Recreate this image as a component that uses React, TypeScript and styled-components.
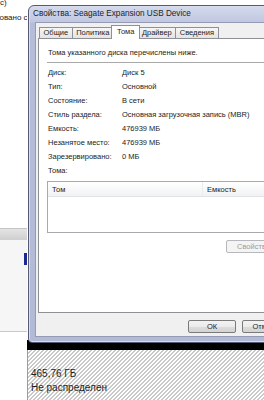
import React from 'react';
import styled, { createGlobalStyle } from 'styled-components';

const GlobalStyle = createGlobalStyle`
  html, body {
    margin: 0;
    padding: 0;
    background: #fff;
  }
  body {
    font-family: 'Liberation Sans', Arial, sans-serif;
    overflow: hidden;
  }
  * {
    box-sizing: border-box;
  }
`;

const Desktop = styled.div`
  position: relative;
  width: 264px;
  height: 400px;
  overflow: hidden;
  background: #fff;
`;

/* disk management window behind the dialog */
const Backdrop = styled.div`
  display: flex;
  height: 100%;
`;

const SidePane = styled.div`
  width: 27px;
  flex: none;
  display: flex;
  flex-direction: column;
`;

const SideText = styled.div`
  height: 228px;
  overflow: hidden;
  font-size: 8px;
  line-height: 15px;
  color: #222;
  white-space: nowrap;
`;

const SideLine = styled.div<{ $shift?: number }>`
  margin-left: ${({ $shift }) => $shift ?? 0}px;
  &:first-child {
    margin-top: -5px;
  }
`;

const Band = styled.div`
  height: 12px;
  border-top: 1px solid #c4c4c4;
  background: linear-gradient(#e4e4e4, #cfcfcf);
`;

const MidPane = styled.div`
  height: 92px;
  background: #f6f6f6;
  border-bottom: 1px solid #c9c9c9;
  display: flex;
  justify-content: flex-end;
  padding-top: 13px;
`;

const BlueMark = styled.div`
  width: 3px;
  height: 12px;
  background: #1b2a8e;
`;

const DiskPane = styled.div`
  flex: 1;
  display: flex;
  flex-direction: column;
  justify-content: flex-end;
`;

const DiskHead = styled.div`
  height: 10px;
  background: #000;
`;

const Unallocated = styled.div`
  height: 50px;
  border-left: 1px solid #9c9c9c;
  padding: 17px 0 0 3px;
  font-size: 10px;
  line-height: 14px;
  color: #1f1f1f;
  background: repeating-linear-gradient(
    135deg,
    #fff 0 1.9px,
    #c9c9c9 1.9px 2.83px
  );
`;

/* properties dialog */
const Dialog = styled.div`
  position: absolute;
  left: 28px;
  top: 5px;
  width: 277px;
  height: 338px;
  display: flex;
  flex-direction: column;
  padding: 0 6px 5px;
  border: 1px solid #545a76;
  border-radius: 6px 6px 4px 4px;
  background: linear-gradient(#d5daec 0, #c0c7e0 16px, #b6bdd9 17px, #b3bad6 100%);
  box-shadow: inset 0 0 0 1px #d9ddee;
`;

const Title = styled.div`
  height: 16px;
  margin-left: -2px;
  font-size: 8.2px;
  line-height: 16px;
  color: #1e1e1e;
  white-space: nowrap;
`;

const Client = styled.div`
  flex: 1;
  display: flex;
  flex-direction: column;
  padding: 4px 7px 0 2px;
  background: #f0f0f0;
  border: 1px solid #959bb4;
`;

const TabRow = styled.div`
  display: flex;
  align-items: flex-end;
  height: 11px;
  padding-left: 2px;
`;

const Tab = styled.div<{ $active?: boolean }>`
  position: relative;
  z-index: ${({ $active }) => ($active ? 1 : 0)};
  height: ${({ $active }) => ($active ? 14 : 11)}px;
  margin: 0 ${({ $active }) => ($active ? -2 : 0)}px
    ${({ $active }) => ($active ? -1 : 0)}px
    ${({ $active }) => ($active ? -3 : -1)}px;
  padding: ${({ $active }) => ($active ? '1px 5px 0' : '0 3.5px')};
  font-size: 7.5px;
  line-height: 10px;
  color: #1e1e1e;
  white-space: nowrap;
  border: 1px solid #8d9095;
  border-bottom: none;
  background: ${({ $active }) =>
    $active ? '#fff' : 'linear-gradient(#f6f6f6, #e4e4e4)'};
`;

const Panel = styled.div`
  height: 275px;
  padding: 7px 8px 0;
  background: #fff;
  border: 1px solid #8d9095;
  font-size: 7.5px;
  color: #222;
`;

const Intro = styled.div`
  line-height: 13px;
  padding-left: 1px;
  white-space: nowrap;
`;

const Separator = styled.div`
  height: 1px;
  margin: 3px -20px 2px 0;
  background: #a9a9a9;
`;

const InfoGrid = styled.div`
  display: grid;
  grid-template-columns: 74px 1fr;
  grid-auto-rows: 14px;
  align-items: center;
  padding-left: 1px;
  white-space: nowrap;
`;

const Caption = styled.div`
  margin-top: 1px;
  line-height: 14px;
  padding-left: 1px;
`;

const ListView = styled.div`
  height: 52px;
  margin-top: 3px;
  border: 1px solid #a6a9b0;
`;

const ListHeader = styled.div`
  display: flex;
  height: 15px;
  line-height: 15px;
  background: linear-gradient(#fff, #f1f2f4);
  border-bottom: 1px solid #e2e3e6;
`;

const HeaderCell = styled.div<{ $width?: number }>`
  flex: ${({ $width }) => ($width ? 'none' : '1')};
  width: ${({ $width }) => ($width ? `${$width}px` : 'auto')};
  padding-left: 4px;
  border-right: 1px solid #ebecef;
  white-space: nowrap;
`;

const PanelActions = styled.div`
  display: flex;
  justify-content: flex-end;
  margin-top: 7px;
`;

const PushButton = styled.div<{ $disabled?: boolean; $width: number }>`
  width: ${({ $width }) => $width}px;
  height: 13px;
  font-size: 7.5px;
  line-height: 11px;
  text-align: center;
  white-space: nowrap;
  color: ${({ $disabled }) => ($disabled ? '#9b9b9b' : '#1e1e1e')};
  border: 1px solid ${({ $disabled }) => ($disabled ? '#b5b8bc' : '#7a7a7a')};
  border-radius: 2px;
  background: ${({ $disabled }) =>
    $disabled
      ? '#f4f4f4'
      : 'linear-gradient(#f3f3f3 0, #ebebeb 50%, #dddddd 51%, #d3d3d3 100%)'};
`;

const ButtonRow = styled.div`
  display: flex;
  justify-content: flex-end;
  gap: 6px;
  padding-top: 7px;
`;

const volumeInfo: [string, string][] = [
  ['Диск:', 'Диск 5'],
  ['Тип:', 'Основной'],
  ['Состояние:', 'В сети'],
  ['Стиль раздела:', 'Основная загрузочная запись (MBR)'],
  ['Емкость:', '476939 МБ'],
  ['Незанятое место:', '476939 МБ'],
  ['Зарезервировано:', '0 МБ'],
];

const tabs = ['Общие', 'Политика', 'Тома', 'Драйвер', 'Сведения'];

const App: React.FC = () => {
  return (
    <Desktop>
      <GlobalStyle />
      <Backdrop>
        <SidePane>
          <SideText>
            <SideLine>с)</SideLine>
            <SideLine $shift={-5}>ровано с</SideLine>
          </SideText>
          <Band />
          <MidPane>
            <BlueMark />
          </MidPane>
        </SidePane>
        <DiskPane>
          <DiskHead />
          <Unallocated>
            <div>465,76 ГБ</div>
            <div>Не распределен</div>
          </Unallocated>
        </DiskPane>
      </Backdrop>

      <Dialog>
        <Title>Свойства: Seagate Expansion USB Device</Title>
        <Client>
          <TabRow>
            {tabs.map((t) => (
              <Tab key={t} $active={t === 'Тома'}>
                {t}
              </Tab>
            ))}
          </TabRow>
          <Panel>
            <Intro>Тома указанного диска перечислены ниже.</Intro>
            <Separator />
            <InfoGrid>
              {volumeInfo.map(([label, value]) => (
                <React.Fragment key={label}>
                  <div>{label}</div>
                  <div>{value}</div>
                </React.Fragment>
              ))}
            </InfoGrid>
            <Caption>Тома:</Caption>
            <ListView>
              <ListHeader>
                <HeaderCell $width={155}>Том</HeaderCell>
                <HeaderCell>Емкость</HeaderCell>
              </ListHeader>
            </ListView>
            <PanelActions>
              <PushButton $disabled $width={55}>
                Свойства
              </PushButton>
            </PanelActions>
          </Panel>
          <ButtonRow>
            <PushButton $width={48}>ОК</PushButton>
            <PushButton $width={48}>Отмена</PushButton>
          </ButtonRow>
        </Client>
      </Dialog>
    </Desktop>
  );
};

export default App;
